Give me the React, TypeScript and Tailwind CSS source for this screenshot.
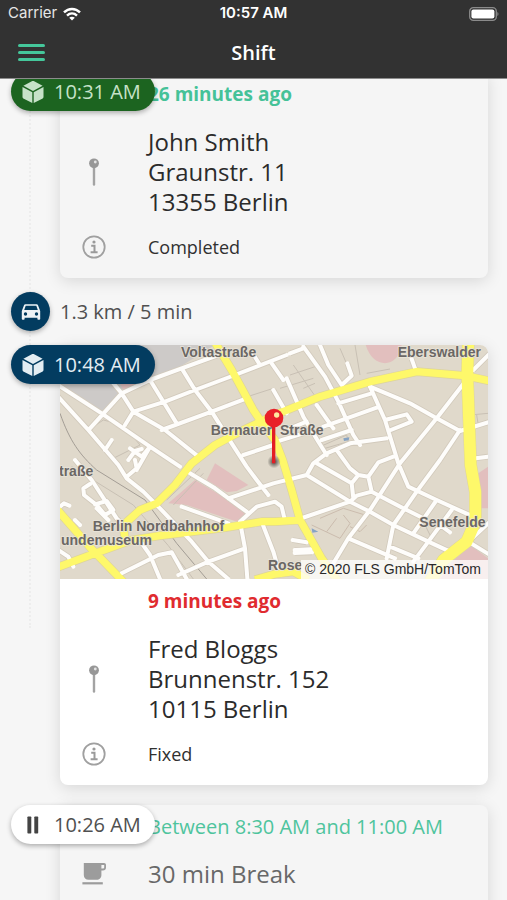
import clsx from 'clsx';
import type { ReactNode } from 'react';

type Tone = 'done' | 'active' | 'idle';

const pillTones: Record<Tone, string> = {
  done: 'bg-[#1c6420] text-[#c6e2c8]',
  active: 'bg-[#033c60] text-[#e3edf3]',
  idle: 'bg-white text-[#505050]',
};

/* Street map geometry, drawn on a 1284 x 702 canvas */
const sideStreets = [
  'M-10 118L125 205L270 305L360 365',
  'M-10 150L85 255L175 360L200 400L250 440L300 490L395 590L445 650L505 702',
  'M45 345L95 405L170 520L195 545',
  'M90 250L185 145L270 105L365 70L475 30',
  'M160 115L185 145L220 200L195 240',
  'M220 200L315 170L405 135L525 90L680 30',
  'M220 200L315 255L415 335',
  'M270 105L350 235',
  'M365 70L405 135L455 200L515 295L560 365L590 405L625 450',
  'M305 255L455 200L560 160',
  'M575 20L600 60',
  'M550 330L640 300',
  'M135 315L155 285',
  'M205 345L225 318L245 312M210 310L245 335L270 305L230 375',
  'M390 385L465 430L560 500',
  'M505 460L640 415L740 390',
  'M365 485L505 535',
  'M540 530L590 485L645 470L665 485L672 515',
  'M540 530L555 610L562 700',
  'M605 530L640 620L660 690',
  'M185 685L295 630L335 622L380 702',
  'M235 580L270 630L300 702',
  'M355 690L445 650L555 610',
  'M200 395L230 370L225 345',
  'M90 417L70 430L72 450L110 480L135 510L160 495L140 468L105 478M110 490L145 525',
  'M0 485L12 475L28 482M45 525L60 540M-5 615L25 635L40 665',
  'M730 5L795 95L835 170L880 270L900 300',
  'M690 25L730 10M635 55L670 105',
  'M680 100L730 215L775 290L800 330',
  'M640 135L680 205',
  'M780 0L805 60L845 120L875 92L862 55',
  'M770 180L820 250',
  'M650 290L730 265',
  'M690 250L740 230',
  'M790 245L860 220L950 188',
  'M835 175L935 145',
  'M785 285L875 255',
  'M930 125L975 225L1015 355L1045 425L1130 465L1240 515',
  'M930 125L1050 175L1130 220L1200 258L1290 230',
  'M1215 110L1130 220L1020 355L930 495L865 580L820 655',
  'M1200 255L1140 345L1070 440L1000 540L980 640',
  'M975 225L1040 208L1055 230L985 258',
  'M740 390L760 355L800 325L870 295L980 280',
  'M925 395L955 352L1000 335',
  'M1065 70L1055 42',
  'M1240 75L1290 25M1230 342L1284 335',
  'M830 315L870 370L895 390',
  'M740 390L870 470L930 500L1000 540L1105 590L1170 620',
  'M770 355L875 415L880 460',
  'M875 415L895 390L925 395L935 440L890 452L870 470',
  'M700 528L870 470',
  'M935 440L1030 490L1090 520',
  'M1130 465L1060 565',
  'M1175 495L1105 590L1060 650',
  'M865 580L1005 640',
  'M990 605L1075 640',
  'M1140 540L1170 562',
  'M1290 530L1225 590L1290 630',
  'M698 585L740 592M704 615L752 613M704 624L756 622',
].join('');

const mainRoads = [
  'M465 -8L515 75L545 130L580 195L610 240L645 285L668 345L695 435L720 525L785 640L835 710',
  'M-10 668L105 625L215 585L300 572L495 548L605 530L645 530L720 525',
  'M195 585L190 540L240 495L290 475L345 420L395 355L465 300L550 255L640 212L780 155L930 110L1070 80L1215 92L1290 108',
  'M-10 492L95 612L190 710',
  'M585 704L645 687L700 680L745 704',
].join('');

const bigRoad = 'M1225 -10L1222 90L1232 360L1246 440L1246 530L1220 590L1150 645L1110 710';

const mapLabels = [
  { text: 'Voltastraße', x: 363, y: 36 },
  { text: 'Eberswalder', x: 1013, y: 36 },
  { text: 'Bernauer', x: 452, y: 270 },
  { text: 'Straße', x: 660, y: 270 },
  { text: 'traße', x: -3, y: 392 },
  { text: 'Berlin Nordbahnhof', x: 98, y: 557 },
  { text: 'undemuseum', x: 3, y: 601 },
  { text: 'Senefelde', x: 1078, y: 547 },
  { text: 'Rose', x: 624, y: 675 },
];

function StreetMap() {
  return (
    <div className="relative h-[234px] overflow-hidden rounded-t-lg">
      <svg
        viewBox="0 0 1284 702"
        preserveAspectRatio="xMidYMid slice"
        className="block h-full w-full"
        role="img"
        aria-label="Map of Bernauer Straße"
      >
        <defs>
          <radialGradient id="pin-shadow">
            <stop offset="0" stopColor="#000" stopOpacity="0.7" />
            <stop offset="1" stopColor="#000" stopOpacity="0" />
          </radialGradient>
        </defs>
        <rect width="1284" height="702" fill="#e0d9cb" />
        <path d="M0 0H465L365 62L185 135L125 200L0 118Z" fill="#cdcac8" />
        <g fill="#e2bfbe">
          <path d="M917 0H1025C1015 70 940 75 917 0Z" />
          <path d="M325 475L405 405L565 500L545 535L380 480Z" />
          <path d="M440 405L465 355L565 420L530 438L500 442Z" />
          <path d="M1255 385L1284 365V490L1258 490Z" />
          <path d="M1175 650L1230 600L1284 640V702H1140Z" />
          <path d="M180 115L230 118L190 135Z" />
        </g>
        {/* Railway lines and footpaths */}
        <g fill="none" stroke="#c8c0b4" strokeWidth="3">
          <path d="M0 205C30 290 60 330 110 375L255 465L350 595L440 702" stroke="#a39d95" />
          <path d="M35 365L220 480L325 602L400 702" />
          <path d="M85 255L130 225L190 240L240 300L160 340" />
          <path d="M340 480L430 385M320 465L420 370" />
          <path d="M500 175L640 130M840 10L870 80M885 0L900 90M690 90L780 60M660 130L760 100M700 60L770 160M730 130L765 115M920 85L990 72" />
          <path d="M780 305L860 270L865 290L795 310" />
          <path d="M755 540L840 580L870 535L850 510M780 520L850 490L915 510M800 560L830 520M920 540L900 560L870 545" stroke="#cbbcae" />
          <path d="M1230 210L1284 205M1250 210L1255 240M1090 530L1120 590" />
        </g>
        <g fill="none" strokeLinejoin="round">
          <path d={sideStreets} stroke="#d2cabc" strokeWidth="17" />
          <path d={mainRoads} stroke="#ddd49c" strokeWidth="26" />
          <path d={bigRoad} stroke="#ddd49c" strokeWidth="38" />
          <path d={sideStreets} stroke="#fefdfb" strokeWidth="12" strokeLinecap="round" />
          <path d={mainRoads} stroke="#fef86a" strokeWidth="22" />
          <path d={bigRoad} stroke="#fef86a" strokeWidth="35" />
        </g>
        <path d="M850 280L868 277L866 286L852 288Z M755 550L775 560L757 563Z" fill="#86a3c4" />
        <g
          className="font-['Liberation_Sans',Arial,sans-serif] font-bold"
          fontSize="42"
          fill="#6b6764"
          stroke="#e9e4da"
          strokeWidth="4"
          paintOrder="stroke"
        >
          {mapLabels.map((label) => (
            <text key={label.text} x={label.x} y={label.y}>
              {label.text}
            </text>
          ))}
        </g>
        {/* Destination pin */}
        <ellipse cx="642" cy="350" rx="20" ry="20" fill="url(#pin-shadow)" />
        <path d="M641 220V355" stroke="#e31e25" strokeWidth="10" />
        <circle cx="642" cy="219" r="28" fill="#e8202a" />
        <circle cx="650" cy="210" r="8" fill="#ffe9a0" />
      </svg>
      <span className="absolute right-0 bottom-0 bg-white/75 pr-[7px] pl-1 font-['Liberation_Sans',Arial,sans-serif] text-sm leading-[19px] text-[#2a2a2a]">
        © 2020 FLS GmbH/TomTom
      </span>
    </div>
  );
}

function CubeIcon() {
  return (
    <svg viewBox="0 0 24 24" className="size-6 shrink-0" fill="currentColor" aria-hidden="true">
      <path d="M11.3 1.1Q12 0.8 12.7 1.1L21.6 5.8L12 11L2.4 5.8Z" />
      <path d="M1.5 7L11.3 12.3V23L2.3 18.4Q1.5 18 1.5 17.1Z" />
      <path d="M22.5 7L12.7 12.3V23L21.7 18.4Q22.5 18 22.5 17.1Z" />
    </svg>
  );
}

function CarIcon() {
  return (
    <svg viewBox="0 0 24 24" className="size-6" fill="currentColor" aria-hidden="true">
      <path
        fillRule="evenodd"
        d="M6.4 4.2H17.6C18.3 4.2 18.8 4.6 19 5.2L21.2 11V19C21.2 19.5 20.8 19.8 20.4 19.8H19.2C18.7 19.8 18.4 19.4 18.4 19V17.8H5.6V19C5.6 19.4 5.3 19.8 4.8 19.8H3.6C3.2 19.8 2.8 19.5 2.8 19V11L5 5.2C5.2 4.6 5.7 4.2 6.4 4.2ZM6.7 5.8L5.2 10H18.8L17.3 5.8ZM6.5 12.3A1.7 1.7 0 1 0 6.5 15.7A1.7 1.7 0 1 0 6.5 12.3ZM17.5 12.3A1.7 1.7 0 1 0 17.5 15.7A1.7 1.7 0 1 0 17.5 12.3Z"
      />
    </svg>
  );
}

function PauseIcon() {
  return (
    <svg viewBox="0 0 24 24" className="size-6 shrink-0" fill="#444" aria-hidden="true">
      <rect x="6.4" y="3.4" width="3.9" height="17.2" rx="0.8" />
      <rect x="13.3" y="3.4" width="3.9" height="17.2" rx="0.8" />
    </svg>
  );
}

function PinIcon() {
  return (
    <svg viewBox="0 0 24 28" className="h-7 w-6" aria-hidden="true">
      <path d="M12 8V26.5" stroke="#a3a3a3" strokeWidth="2.4" strokeLinecap="round" />
      <circle cx="12" cy="5.3" r="4.9" fill="#979797" />
      <circle cx="13.3" cy="4" r="1.4" fill="#e4e4e4" />
    </svg>
  );
}

function InfoIcon() {
  return (
    <svg viewBox="0 0 24 24" className="size-6" aria-hidden="true">
      <circle cx="12" cy="12" r="10.7" fill="none" stroke="#a0a0a0" strokeWidth="1.8" />
      <circle cx="12" cy="7" r="1.6" fill="#9a9a9a" />
      <path d="M9.2 10.7H12.5V17.2M8.6 17.2H15.6" fill="none" stroke="#9a9a9a" strokeWidth="2" />
    </svg>
  );
}

function CupIcon() {
  return (
    <svg viewBox="0 0 24 24" className="size-6" fill="#9c9c9c" aria-hidden="true">
      <path
        fillRule="evenodd"
        d="M2 1H22C23.2 1 24 1.8 24 3V5.4C24 7.2 22.8 8.4 21 8.4H19.4V13C19.4 15.8 17.4 17.8 14.6 17.8H6.6C3.8 17.8 1.8 15.8 1.8 13V1ZM19.4 3V6.6H20.8C21.6 6.6 22.2 6 22.2 5.2V3Z"
      />
      <path d="M0.4 20.2H20.8V22.4H0.4Z" />
    </svg>
  );
}

function WifiIcon() {
  return (
    <svg viewBox="0 0 18 14" className="h-[14px] w-[18px]" fill="none" stroke="#fff" strokeWidth="2.4" aria-hidden="true">
      <path d="M1 5.4C5.6 0.8 12.4 0.8 17 5.4" />
      <path d="M4 8.6C6.9 5.8 11.1 5.8 14 8.6" />
      <path d="M9 13.6L6.2 10.8C7.8 9.3 10.2 9.3 11.8 10.8Z" fill="#fff" stroke="none" />
    </svg>
  );
}

function BatteryIcon() {
  return (
    <svg viewBox="0 0 30 14" className="h-[14px] w-[30px]" aria-hidden="true">
      <rect x="0.7" y="0.7" width="26.6" height="12.6" rx="3.6" fill="none" stroke="#8b8b8b" strokeWidth="1.3" />
      <rect x="2.4" y="2.4" width="23" height="9.2" rx="2" fill="#fff" />
      <path d="M28.4 5C29.8 5.5 29.8 8.5 28.4 9Z" fill="#8b8b8b" />
    </svg>
  );
}

function TimePill({ tone, icon, time }: { tone: Tone; icon: ReactNode; time: string }) {
  return (
    <div
      className={clsx(
        'absolute top-0 left-[11px] z-10 flex h-[39px] w-36 items-center gap-[9px] rounded-full pl-[10px] text-xl shadow-[0_2px_5px_rgba(0,0,0,0.3)]',
        pillTones[tone]
      )}
    >
      {icon}
      <time>{time}</time>
    </div>
  );
}

function Row({ icon, children, className }: { icon?: ReactNode; children: ReactNode; className?: string }) {
  return (
    <div className={clsx('flex items-center', className)}>
      <div className="w-[88px] shrink-0 pl-[22px]">{icon}</div>
      <div className="min-w-0 flex-1">{children}</div>
    </div>
  );
}

function Card({ pill, className, children }: { pill: ReactNode; className?: string; children: ReactNode }) {
  return (
    <li className="relative pr-[19px] pl-[60px]">
      {pill}
      <article className={clsx('rounded-lg shadow-[0_3px_16px_rgba(0,0,0,0.13)]', className)}>{children}</article>
    </li>
  );
}

function Visit({ ago, agoClass, address, status }: { ago: string; agoClass: string; address: string[]; status: string }) {
  return (
    <div className="pb-[2px]">
      <Row className="h-11">
        <p className={clsx('text-[19px] font-bold', agoClass)}>{ago}</p>
      </Row>
      <Row icon={<PinIcon />} className="pt-[11px]">
        <address className="text-2xl leading-[30px] text-[#2b2b2b] not-italic">
          {address.map((line) => (
            <div key={line}>{line}</div>
          ))}
        </address>
      </Row>
      <Row icon={<InfoIcon />} className="h-[59px]">
        <p className="text-lg text-[#303030]">{status}</p>
      </Row>
    </div>
  );
}

export default function App() {
  return (
    <div className="flex h-screen flex-col bg-[#f6f6f6] font-['Open_Sans','Noto_Sans',sans-serif]">
      <header className="shrink-0 border-b border-[#8c8c8c] bg-[#323232] text-white">
        <div className="grid h-[27px] grid-cols-3 items-center px-2 font-[Inter,Roboto,sans-serif] text-[15px]">
          <div className="flex items-center gap-[6px] text-[#e6e6e6]">
            Carrier
            <WifiIcon />
          </div>
          <time className="text-center font-semibold">10:57 AM</time>
          <div className="flex justify-end">
            <BatteryIcon />
          </div>
        </div>
        <div className="grid h-[51px] grid-cols-[1fr_auto_1fr] items-center px-[18px]">
          <button type="button" aria-label="Open menu" className="flex w-[27px] flex-col gap-1">
            <span className="h-[3px] w-full rounded-full bg-[#45c79b]" />
            <span className="h-[3px] w-full rounded-full bg-[#45c79b]" />
            <span className="h-[3px] w-full rounded-full bg-[#45c79b]" />
          </button>
          <h1 className="text-xl font-semibold">Shift</h1>
        </div>
      </header>

      <main className="min-h-0 flex-1 overflow-y-auto [scrollbar-width:none]">
        <ol className="relative -mt-[7px]">
          {/* Timeline between the stops */}
          <li aria-hidden="true" className="absolute top-0 left-[29px] h-[556px] border-l-2 border-dotted border-[#ededed]" />

          <Card pill={<TimePill tone="done" icon={<CubeIcon />} time="10:31 AM" />} className="bg-[#f5f5f5]">
            <Visit
              ago="26 minutes ago"
              agoClass="text-[#45c298]"
              address={['John Smith', 'Graunstr. 11', '13355 Berlin']}
              status="Completed"
            />
          </Card>

          <li className="relative flex items-center gap-[10px] py-[14px] pl-[11px] text-xl text-[#505050]">
            <span className="flex size-[39px] items-center justify-center rounded-full bg-[#033c60] text-[#eef3f6] shadow-[0_2px_5px_rgba(0,0,0,0.3)]">
              <CarIcon />
            </span>
            1.3 km / 5 min
          </li>

          <Card pill={<TimePill tone="active" icon={<CubeIcon />} time="10:48 AM" />} className="bg-white">
            <StreetMap />
            <Visit
              ago="9 minutes ago"
              agoClass="text-[#e02b2f]"
              address={['Fred Bloggs', 'Brunnenstr. 152', '10115 Berlin']}
              status="Fixed"
            />
          </Card>

          <li aria-hidden="true" className="h-5" />

          <Card pill={<TimePill tone="idle" icon={<PauseIcon />} time="10:26 AM" />} className="bg-[#f5f5f5] pb-8">
            <Row className="h-11">
              <p className="text-xl text-[#4ec49d]">Between 8:30 AM and 11:00 AM</p>
            </Row>
            <Row icon={<CupIcon />} className="h-[50px]">
              <p className="text-2xl text-[#686868]">30 min Break</p>
            </Row>
          </Card>
        </ol>
      </main>
    </div>
  );
}
